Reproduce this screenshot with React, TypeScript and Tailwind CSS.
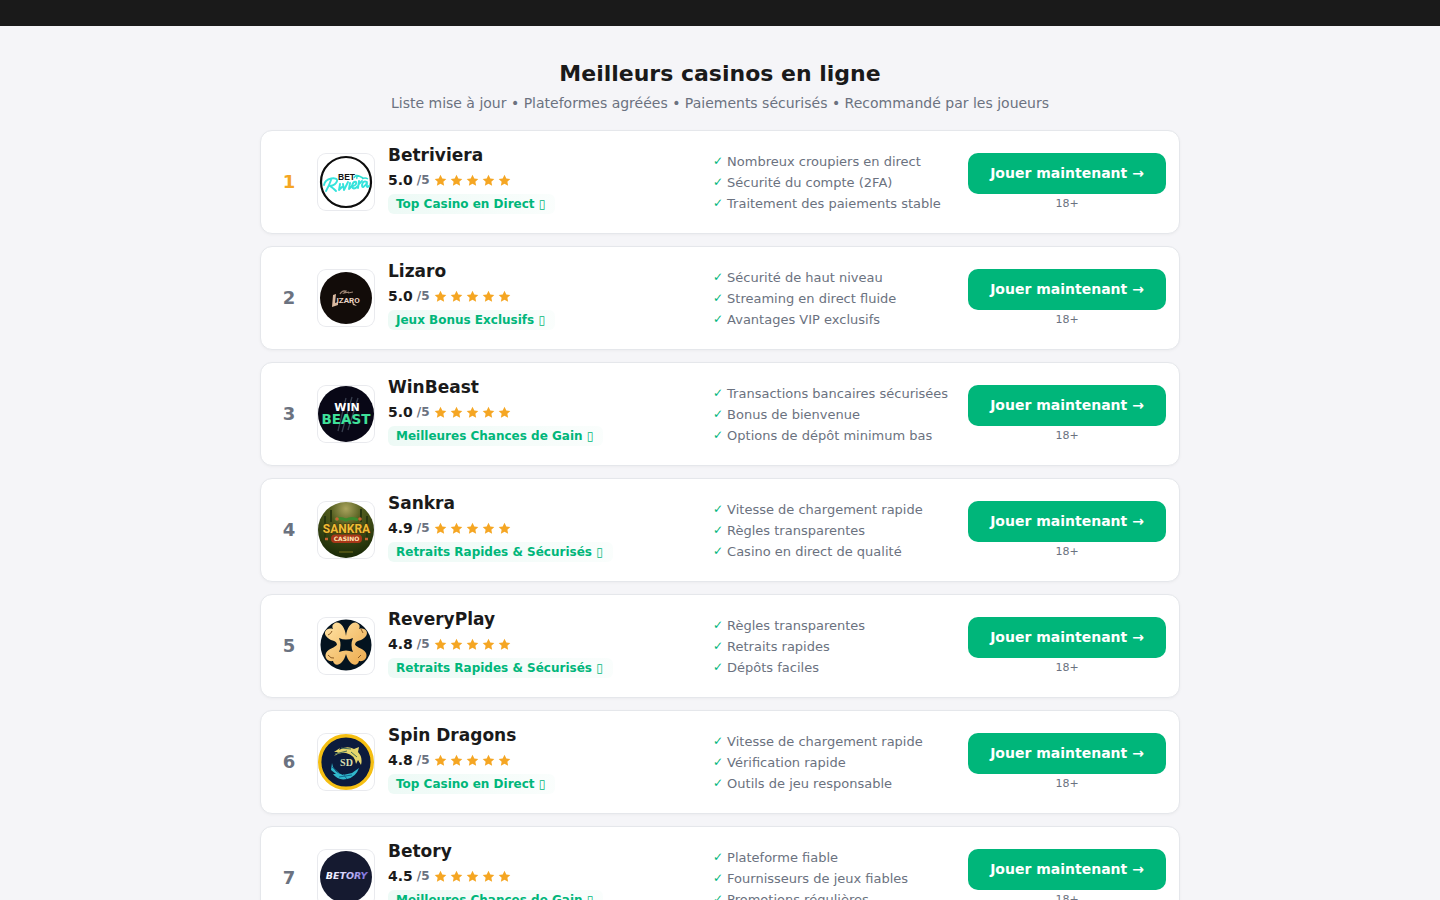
import type { ReactNode } from "react";

interface Casino {
  name: string;
  score: string;
  badge: string;
  features: string[];
  logo: ReactNode;
}

const LogoFrame = ({ children }: { children: ReactNode }) => (
  <svg viewBox="0 0 56 56" className="block w-full h-full" aria-hidden="true">
    {children}
  </svg>
);

const BetrivieraLogo = () => (
  <LogoFrame>
    <circle cx="28" cy="28" r="25" fill="#fff" stroke="#0d0d0d" strokeWidth="2.2" />
    <text x="20" y="26" fontFamily="Liberation Sans" fontWeight="700" fontSize="8.5" fill="#111">BET</text>
    <path d="M36 24 q2 -4 5 -2 q-3 0 -2 3 M41 22 l4 2 M44 25 q3 -2 6 0" fill="none" stroke="#2fdcd0" strokeWidth="1.4" />
    {/* script lettering */}
    <g fill="none" stroke="#35e3dc" strokeWidth="1.9" strokeLinecap="round" strokeLinejoin="round">
      <path d="M13 26 Q11 32 8 37 M6 31 C7 24 20 22 19 27 Q18 31 12 32 Q15 34 18 37" />
      <path d="M22 30 L21 36 L24 33 M25 30 L26 36 L30 28 M32 29 L31 35 L34 32" />
      <path d="M35 32 Q39 31 38 28 Q35 27 34 32 Q35 37 40 32 M41 27 L40 34 M41 30 L44 27" />
      <path d="M49 28 Q45 26 44 31 Q44 36 49 29 Q48 35 51 32" />
    </g>
  </LogoFrame>
);

const LizaroLogo = () => (
  <LogoFrame>
    <circle cx="28" cy="28" r="26" fill="#120c09" />
    <path d="M22 24 q2 -4 6 -3 l-2 2 l5 -1 M30 23 l5 -1" fill="none" stroke="#9a8271" strokeWidth="1.2" />
    <path d="M15 25 L18 24 L17 33 L20 32 L20 35 L14 37 Z M34 32 L39 36 L35 35" fill="#d9b9a0" />
    <text x="18.5" y="33" fontFamily="Roboto" fontWeight="700" fontSize="8" fill="#ecd6c5">IZARO</text>
  </LogoFrame>
);

const WinBeastLogo = () => (
  <LogoFrame>
    <circle cx="28" cy="28" r="28" fill="#080716" />
    <path d="M28 12 L20 45 M34 11 L24 46 M40 12 L30 44" stroke="#394050" strokeWidth="1.3" />
    <text x="29" y="25" textAnchor="middle" fontFamily="DejaVu Sans" fontWeight="700" fontSize="11" fill="#fff">WIN</text>
    <text x="28" y="37.5" textAnchor="middle" fontFamily="DejaVu Sans" fontWeight="700" fontSize="13.5" fill="#3fe09a">BEAST</text>
  </LogoFrame>
);

const SankraLogo = () => (
  <LogoFrame>
    <defs>
      <radialGradient id="jungle" cx="50%" cy="12%" r="85%">
        <stop offset="0" stopColor="#aaa45e" />
        <stop offset=".35" stopColor="#4f5a1c" />
        <stop offset="1" stopColor="#1c2c08" />
      </radialGradient>
    </defs>
    <circle cx="28" cy="28" r="28" fill="url(#jungle)" />
    <path d="M7 14 V42 M13 8 V20 M43 7 V20 M49 14 V42" stroke="#28370f" strokeWidth="2" />
    <path d="M17 18 q5 -3 11 0 q6 -3 12 0" fill="none" stroke="#3c8b2d" strokeWidth="3" />
    <circle cx="19" cy="17" r="1.8" fill="#c96332" />
    <circle cx="42" cy="17" r="1.8" fill="#c96332" />
    <text x="28.5" y="31" textAnchor="middle" fontFamily="Roboto" fontWeight="700" fontSize="12" fill="#efbd35" stroke="#493209" strokeWidth="1" paintOrder="stroke">SANKRA</text>
    <rect x="13" y="32.5" width="31" height="8.5" rx="4" fill="#a83618" />
    <text x="28.5" y="39" textAnchor="middle" fontFamily="DejaVu Sans" fontWeight="700" fontSize="6" fill="#ffe5b4">CASINO</text>
    <path d="M7 37h3 M47 37h3" stroke="#c96332" strokeWidth="2.4" />
    <path d="M21 50 h14" stroke="#77701f" />
  </LogoFrame>
);

const ReveryPlayLogo = () => (
  <LogoFrame>
    <defs>
      <linearGradient id="gold" x2="1" y2="1">
        <stop offset="0" stopColor="#ffe3a4" />
        <stop offset="1" stopColor="#edaa4d" />
      </linearGradient>
    </defs>
    <circle cx="28" cy="27" r="25.5" fill="#04131f" />
    <path
      d="M28 18 C27 9 22 3 17 5 Q13 7 15 11 C9 9 5 14 8 18 C12 24 18 21 19 26.5 C17 30 11 30 8 35 C6 40 10 44 15 43 C17 50 25 47 28 36 C31 47 39 50 41 43 C46 44 50 40 48 35 C45 30 39 30 37 26.5 C38 21 44 24 48 18 C51 14 47 9 41 11 Q43 7 39 5 C34 3 29 9 28 18 Z"
      fill="url(#gold)"
    />
    <path d="M21 20 Q28 23 35 20 Q32 27 35 34 Q28 31 21 34 Q24 27 21 20 Z" fill="#04131f" />
    <path d="M10 17 q3 -1 4 -4 M43 11 l2 4 M10 37 q3 4 6 3 M40 40 l3 -3" fill="none" stroke="#8c5b24" />
  </LogoFrame>
);

const SpinDragonsLogo = () => (
  <LogoFrame>
    <circle cx="28" cy="28" r="26.3" fill="#0c1b3d" stroke="#f5bf13" strokeWidth="3.4" />
    <path d="M16 18 L22 14 L21 16 Q29 11 36 15 L41 13 L40 18 Q45 23 43 31 L40 26 L38 30 Q37 21 28 19 Q22 18 16 22 L20 18 Z" fill="#e6d66b" />
    <path d="M23 14 L33 15 M17 20 L29 17 M33 18 L39 23" stroke="#456b58" />
    <path d="M14 29 Q15 38 25 41 L34 39 L41 34 Q38 43 29 45 Q20 47 15 40 L18 40 L13 36 Z" fill="#31b7cc" />
    <path d="M14 33 L21 39 M21 43 L34 41 M25 40 L29 45" stroke="#136a91" />
    <text x="28.5" y="32" textAnchor="middle" fontFamily="Liberation Serif" fontWeight="700" fontSize="10" fill="#d8dfaf">SD</text>
  </LogoFrame>
);

const BetoryLogo = () => (
  <LogoFrame>
    <defs>
      <linearGradient id="violet">
        <stop offset="0" stopColor="#fff" />
        <stop offset=".45" stopColor="#d8d4fb" />
        <stop offset="1" stopColor="#7866da" />
      </linearGradient>
    </defs>
    <circle cx="28" cy="27" r="26" fill="#151a30" />
    <text x="28.5" y="29" textAnchor="middle" fontFamily="DejaVu Sans" fontWeight="700" fontStyle="italic" fontSize="9.5" fill="url(#violet)">BETORY</text>
  </LogoFrame>
);

const casinos: Casino[] = [
  {
    name: "Betriviera",
    score: "5.0",
    badge: "Top Casino en Direct",
    features: ["Nombreux croupiers en direct", "Sécurité du compte (2FA)", "Traitement des paiements stable"],
    logo: <BetrivieraLogo />,
  },
  {
    name: "Lizaro",
    score: "5.0",
    badge: "Jeux Bonus Exclusifs",
    features: ["Sécurité de haut niveau", "Streaming en direct fluide", "Avantages VIP exclusifs"],
    logo: <LizaroLogo />,
  },
  {
    name: "WinBeast",
    score: "5.0",
    badge: "Meilleures Chances de Gain",
    features: ["Transactions bancaires sécurisées", "Bonus de bienvenue", "Options de dépôt minimum bas"],
    logo: <WinBeastLogo />,
  },
  {
    name: "Sankra",
    score: "4.9",
    badge: "Retraits Rapides & Sécurisés",
    features: ["Vitesse de chargement rapide", "Règles transparentes", "Casino en direct de qualité"],
    logo: <SankraLogo />,
  },
  {
    name: "ReveryPlay",
    score: "4.8",
    badge: "Retraits Rapides & Sécurisés",
    features: ["Règles transparentes", "Retraits rapides", "Dépôts faciles"],
    logo: <ReveryPlayLogo />,
  },
  {
    name: "Spin Dragons",
    score: "4.8",
    badge: "Top Casino en Direct",
    features: ["Vitesse de chargement rapide", "Vérification rapide", "Outils de jeu responsable"],
    logo: <SpinDragonsLogo />,
  },
  {
    name: "Betory",
    score: "4.5",
    badge: "Meilleures Chances de Gain",
    features: ["Plateforme fiable", "Fournisseurs de jeux fiables", "Promotions régulières"],
    logo: <BetoryLogo />,
  },
];

const Star = () => (
  <svg viewBox="0 0 24 24" className="w-[13px] h-[13px]" fill="#f5a623" aria-hidden="true">
    <path d="M12 1.5l3.300 6.700 7.400 1-5.400 5.200 1.400 7.400L12 18.200l-6.700 3.600 1.400-7.400L1.300 9.200l7.400-1z" />
  </svg>
);

const CasinoCard = ({ casino, rank }: { casino: Casino; rank: number }) => (
  <li className="grid grid-cols-[30px_56px_1fr] md:grid-cols-[30px_56px_1fr_241px_198px] items-center gap-x-3.5 gap-y-3 rounded-xl border border-[#e5e7eb] bg-white p-[13px] shadow-[0_1px_3px_rgba(0,0,0,0.04)]">
    <span className={rank === 1 ? "text-center text-lg font-bold text-[#f5a623]" : "text-center text-lg font-bold text-[#6b7280]"}>
      {rank}
    </span>

    <div className="h-14 overflow-hidden rounded-lg ring-1 ring-[#e9eaee]">{casino.logo}</div>

    <div className="pb-1.5">
      <h2 className="text-[17px] leading-[22px] font-bold">{casino.name}</h2>
      <div className="mt-[3px] flex items-center gap-1">
        <span className="text-sm leading-[22px] font-bold">{casino.score}</span>
        <span className="text-xs leading-[22px] font-semibold text-[#6b7280]">/5</span>
        <span className="flex gap-[3px]">
          {[1, 2, 3, 4, 5].map((n) => (
            <Star key={n} />
          ))}
        </span>
      </div>
      <p className="mt-[3px] w-fit rounded-md bg-linear-to-r from-[#00b67a]/7 to-[#00b67a]/2 pl-2 pr-2.5 text-xs leading-[20px] font-bold text-[#00b67a]">
        {casino.badge} <span className="font-normal">▯</span>
      </p>
    </div>

    <ul className="col-start-3 md:col-start-auto text-[13px] leading-[21px] text-[#6b7280]">
      {casino.features.map((feature) => (
        <li key={feature} className="flex gap-1 whitespace-nowrap">
          <span className="text-xs leading-[21px] text-[#00b67a]">✓</span>
          {feature}
        </li>
      ))}
    </ul>

    <div className="col-start-3 md:col-start-auto text-center">
      <a href="#" className="block rounded-[10px] bg-[#00b67a] text-sm leading-[41px] font-bold whitespace-nowrap text-white hover:bg-[#009e6a]">
        Jouer maintenant →
      </a>
      <p className="mt-[3px] text-[11px] leading-[14px] text-[#6b7280]">18+</p>
    </div>
  </li>
);

export default function App() {
  return (
    <div className="min-h-screen bg-[#f5f5f8] font-['DejaVu_Sans',sans-serif] text-[#1a1a1a]">
      <header className="h-[26px] bg-[#1a1a1a]" />
      <main className="mx-auto max-w-[952px] px-4 pt-[34px] pb-10">
        <div className="mb-[17px] text-center">
          <h1 className="text-[22px] leading-[28px] font-bold">Meilleurs casinos en ligne</h1>
          <p className="mt-[5px] text-sm leading-[20px] text-[#6b7280]">
            Liste mise à jour • Plateformes agréées • Paiements sécurisés • Recommandé par les joueurs
          </p>
        </div>
        <ol className="flex flex-col gap-3">
          {casinos.map((casino, i) => (
            <CasinoCard key={casino.name} casino={casino} rank={i + 1} />
          ))}
        </ol>
      </main>
    </div>
  );
}
